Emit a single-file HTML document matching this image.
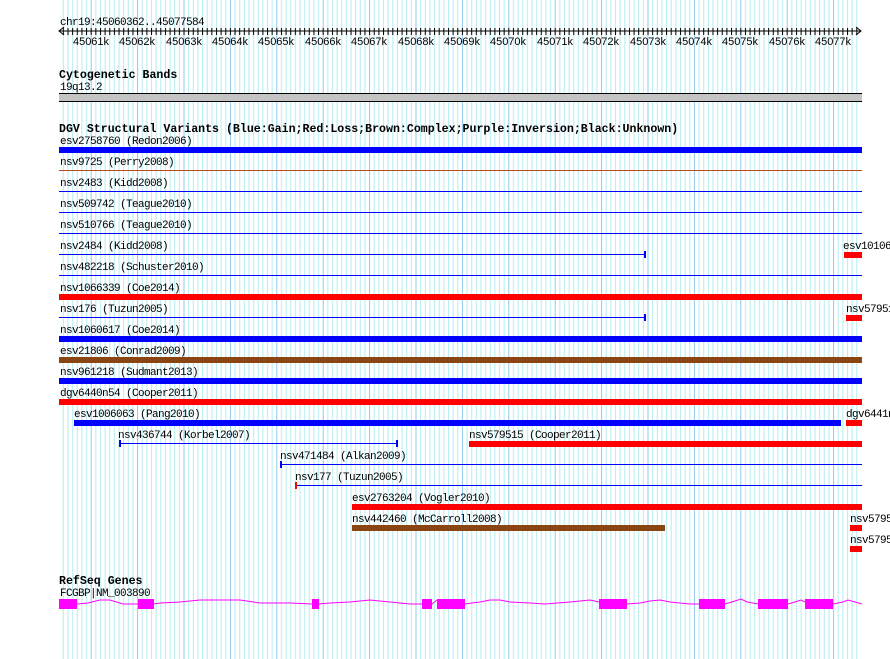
<!DOCTYPE html>
<html><head><meta charset="utf-8"><style>
html,body{margin:0;padding:0;background:#fff;}
svg{display:block}
text{font-family:"Liberation Mono",monospace;font-size:11px;letter-spacing:-0.6px;fill:#000}
.b{font-weight:bold;font-size:11.6px;letter-spacing:0}
.r{font-family:"Liberation Sans",sans-serif;font-size:11px;letter-spacing:0}
</style></head><body>
<svg width="890" height="659" xmlns="http://www.w3.org/2000/svg">
<defs>
<pattern id="g" x="44.3" y="0" width="46.4" height="659" patternUnits="userSpaceOnUse">
<rect x="0.0" width="1" height="659" fill="#90c8f0"/>
<rect x="4.64" width="1" height="659" fill="#b4ecf2"/>
<rect x="9.28" width="1" height="659" fill="#b4ecf2"/>
<rect x="13.92" width="1" height="659" fill="#b4ecf2"/>
<rect x="18.56" width="1" height="659" fill="#b4ecf2"/>
<rect x="23.2" width="1" height="659" fill="#b4ecf2"/>
<rect x="27.84" width="1" height="659" fill="#b4ecf2"/>
<rect x="32.48" width="1" height="659" fill="#b4ecf2"/>
<rect x="37.12" width="1" height="659" fill="#b4ecf2"/>
<rect x="41.76" width="1" height="659" fill="#b4ecf2"/>
</pattern>
<pattern id="t" x="44.3" y="0" width="4.64" height="10" patternUnits="userSpaceOnUse">
<rect x="0" y="0" width="1" height="10" fill="#000"/>
</pattern>
</defs>
<rect x="60" y="0" width="798" height="659" fill="url(#g)"/>

<text x="60" y="25">chr19:45060362..45077584</text>
<rect x="60" y="30.5" width="801" height="1" fill="#000"/>
<rect x="62" y="28" width="797" height="7" fill="url(#t)"/>
<path d="M64 27 L59 31 L64 35 M856 27 L861 31 L856 35" stroke="#000" fill="none"/>
<g text-anchor="middle">
<text class="r" x="91" y="45">45061k</text><text class="r" x="137" y="45">45062k</text><text class="r" x="184" y="45">45063k</text><text class="r" x="230" y="45">45064k</text><text class="r" x="276" y="45">45065k</text><text class="r" x="323" y="45">45066k</text><text class="r" x="369" y="45">45067k</text><text class="r" x="416" y="45">45068k</text><text class="r" x="462" y="45">45069k</text><text class="r" x="508" y="45">45070k</text><text class="r" x="555" y="45">45071k</text><text class="r" x="601" y="45">45072k</text><text class="r" x="648" y="45">45073k</text><text class="r" x="694" y="45">45074k</text><text class="r" x="740" y="45">45075k</text><text class="r" x="787" y="45">45076k</text><text class="r" x="833" y="45">45077k</text>
</g>

<text class="b" x="59" y="78">Cytogenetic Bands</text>
<text x="60" y="90">19q13.2</text>
<rect x="59" y="93" width="803" height="1" fill="#000"/>
<rect x="59" y="94" width="803" height="7" fill="#c4c4c4"/>
<rect x="59" y="101" width="803" height="1" fill="#000"/>

<text class="b" x="59" y="132">DGV Structural Variants (Blue:Gain;Red:Loss;Brown:Complex;Purple:Inversion;Black:Unknown)</text>

<g>
<text x="60" y="144">esv2758760 (Redon2006)</text><rect x="59" y="147" width="803" height="6" fill="#0000ff"/>
<text x="60" y="165">nsv9725 (Perry2008)</text><rect x="59" y="170" width="803" height="1" fill="#c04a20"/>
<text x="60" y="186">nsv2483 (Kidd2008)</text><rect x="59" y="191" width="803" height="1" fill="#0000ff"/>
<text x="60" y="207">nsv509742 (Teague2010)</text><rect x="59" y="212" width="803" height="1" fill="#0000ff"/>
<text x="60" y="228">nsv510766 (Teague2010)</text><rect x="59" y="233" width="803" height="1" fill="#0000ff"/>
<text x="60" y="249">nsv2484 (Kidd2008)</text><rect x="59" y="254" width="586" height="1" fill="#0000ff"/><rect x="644" y="251" width="2" height="7" fill="#0000ff"/>
<text x="843" y="249">esv10106</text><rect x="844" y="252" width="18" height="6" fill="#ff0000"/>
<text x="60" y="270">nsv482218 (Schuster2010)</text><rect x="59" y="275" width="803" height="1" fill="#0000ff"/>
<text x="60" y="291">nsv1066339 (Coe2014)</text><rect x="59" y="294" width="803" height="6" fill="#ff0000"/>
<text x="60" y="312">nsv176 (Tuzun2005)</text><rect x="59" y="317" width="586" height="1" fill="#0000ff"/><rect x="644" y="314" width="2" height="7" fill="#0000ff"/>
<text x="846" y="312">nsv57951</text><rect x="846" y="315" width="16" height="6" fill="#ff0000"/>
<text x="60" y="333">nsv1060617 (Coe2014)</text><rect x="59" y="336" width="803" height="6" fill="#0000ff"/>
<text x="60" y="354">esv21806 (Conrad2009)</text><rect x="59" y="357" width="803" height="6" fill="#8b4513"/>
<text x="60" y="375">nsv961218 (Sudmant2013)</text><rect x="59" y="378" width="803" height="6" fill="#0000ff"/>
<text x="60" y="396">dgv6440n54 (Cooper2011)</text><rect x="59" y="399" width="803" height="6" fill="#ff0000"/>
<text x="74" y="417">esv1006063 (Pang2010)</text><rect x="74" y="420" width="767" height="6" fill="#0000ff"/>
<text x="846" y="417">dgv6441n</text><rect x="846" y="420" width="16" height="6" fill="#ff0000"/>
<text x="118" y="438">nsv436744 (Korbel2007)</text><rect x="119" y="443" width="279" height="1" fill="#0000ff"/><rect x="119" y="440" width="2" height="7" fill="#0000ff"/><rect x="396" y="440" width="2" height="7" fill="#0000ff"/>
<text x="469" y="438">nsv579515 (Cooper2011)</text><rect x="469" y="441" width="393" height="6" fill="#ff0000"/>
<text x="280" y="459">nsv471484 (Alkan2009)</text><rect x="280" y="464" width="582" height="1" fill="#0000ff"/><rect x="280" y="461" width="2" height="7" fill="#0000ff"/>
<text x="295" y="480">nsv177 (Tuzun2005)</text><rect x="296" y="485" width="566" height="1" fill="#0000ff"/><rect x="295" y="482" width="2" height="7" fill="#ff0000"/>
<text x="352" y="501">esv2763204 (Vogler2010)</text><rect x="352" y="504" width="510" height="6" fill="#ff0000"/>
<text x="352" y="522">nsv442460 (McCarroll2008)</text><rect x="352" y="525" width="313" height="6" fill="#8b4513"/>
<text x="850" y="522">nsv5795</text><rect x="850" y="525" width="12" height="6" fill="#ff0000"/>
<text x="850" y="543">nsv5795</text><rect x="850" y="546" width="12" height="6" fill="#ff0000"/>
</g>

<text class="b" x="59" y="584">RefSeq Genes</text>
<text x="60" y="596">FCGBP|NM_003890</text>
<polyline fill="none" stroke="#ff00ff" stroke-width="1" points="77,604 88,603 100,600 110,600 123,604 138,604 154,604 160,603 180,602 200,600 240,600 260,603 290,603 312,604 319,604 330,603 350,602 370,600 390,602 410,604 422,604 432,604 437,600 465,604 472,603 480,602 490,600 500,600 510,602 530,603 545,604 570,602 590,600 599,602 627,604 640,603 650,601 660,600 670,602 690,604 699,604 725,604 735,601 741,599 747,602 758,604 788,604 795,602 801,600 805,602 833,604 843,602 848,600 855,602 862,604"/>
<g fill="#ff00ff">
<rect x="59" y="599" width="18" height="10"/><rect x="138" y="599" width="16" height="10"/><rect x="312" y="599" width="7" height="10"/><rect x="422" y="599" width="10" height="10"/><rect x="437" y="599" width="28" height="10"/><rect x="599" y="599" width="28" height="10"/><rect x="699" y="599" width="26" height="10"/><rect x="758" y="599" width="30" height="10"/><rect x="805" y="599" width="28" height="10"/>
</g>
</svg>
</body></html>
